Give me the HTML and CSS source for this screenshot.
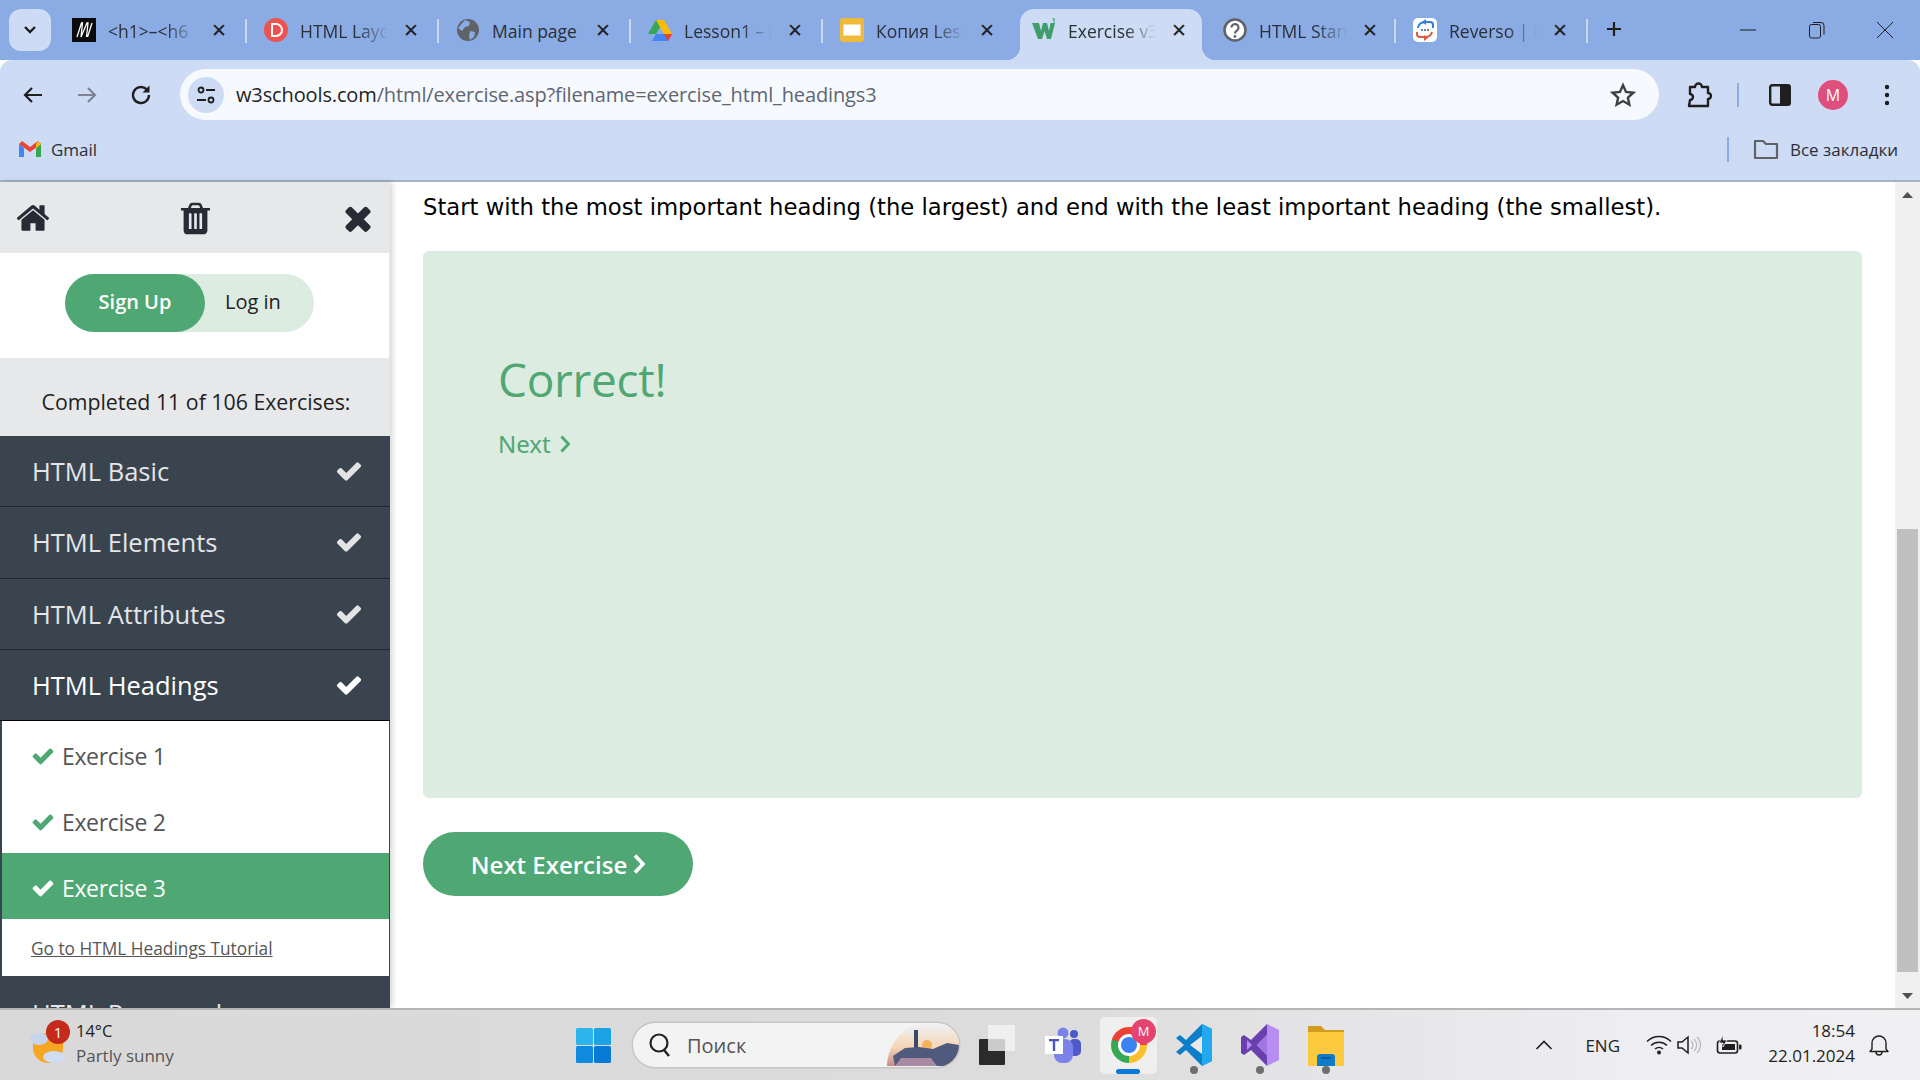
FILE: index.html
```html
<!DOCTYPE html>
<html lang="en">
<head>
<meta charset="utf-8">
<title>Exercise v3.0</title>
<link rel="stylesheet" href="styles.css">
</head>
<body>
<div class="window">
  <header class="tabstrip">
    <div class="tabmenu"><svg width="14" height="10" viewBox="0 0 14 10"><path d="M2 2l5 5 5-5" fill="none" stroke="#1f1f1f" stroke-width="2.4"/></svg></div>
    <div class="tab sep">
      <svg class="fav" viewBox="0 0 24 24"><rect width="24" height="24" fill="#0b0b0b"/><path d="M5 19L9.500 5h1l-1.500 14L15 5h1l-1.500 14M15.500 19L20 5" fill="none" stroke="#fff" stroke-width="1.300"/></svg>
      <span class="tabtext fade">&lt;h1&gt;–&lt;h6</span><span class="tabx">✕</span>
    </div>
    <div class="tab sep">
      <svg class="fav" viewBox="0 0 24 24"><circle cx="12" cy="12" r="12" fill="#ef5350"/><path d="M8 6h4a6 6 0 010 12H8z" fill="none" stroke="#fff" stroke-width="2"/></svg>
      <span class="tabtext fade">HTML Layc</span><span class="tabx">✕</span>
    </div>
    <div class="tab sep">
      <svg class="fav" viewBox="0 0 24 24"><circle cx="12" cy="12" r="11" fill="#5f6368"/><path d="M9 2l5 2-1 4-4 1-3 4-4-3zM14 13l5 1-1 5-4 3-1-4z" fill="#8aabe3"/></svg>
      <span class="tabtext">Main page</span><span class="tabx">✕</span>
    </div>
    <div class="tab sep">
      <svg class="fav" viewBox="0 0 24 24"><path d="M8 2h8l-8 14H0z" fill="#34a853"/><path d="M8 2h8l8 14h-8z" fill="#fbbc04"/><path d="M4 23l4-7h16l-4 7z" fill="#4285f4"/><path d="M20 23l4-7h-8z" fill="#ea4335"/></svg>
      <span class="tabtext fade">Lesson1 – (</span><span class="tabx">✕</span>
    </div>
    <div class="tab">
      <svg class="fav" viewBox="0 0 24 24"><rect width="24" height="24" rx="3" fill="#efb93b"/><rect x="3.500" y="6.500" width="17" height="11" fill="#fff"/></svg>
      <span class="tabtext fade">Копия Less</span><span class="tabx">✕</span>
    </div>
    <div class="tab active">
      <svg class="fav" viewBox="0 0 24 24"><path d="M0 5h7l2 8 2-8h4l2 8 1.500-8H23l-4 16h-4l-2.500-8L10 21H6z" fill="#3f9c6b"/><path d="M20 1h3l-1.500 2c1.500 0 1.500 3-1.500 3" fill="none" stroke="#3f9c6b" stroke-width=".9"/></svg>
      <span class="tabtext fade">Exercise v3</span><span class="tabx">✕</span>
    </div>
    <div class="tab sep wide">
      <svg class="fav" viewBox="0 0 24 24"><circle cx="12" cy="12" r="10.500" fill="#fff" stroke="#5f6368" stroke-width="2.500"/><path d="M8.500 9.500a3.500 3.500 0 116 2.500c-1.500 1.300-2.500 1.800-2.500 3.500" fill="none" stroke="#5f6368" stroke-width="2.200"/><circle cx="12" cy="18.500" r="1.400" fill="#5f6368"/></svg>
      <span class="tabtext fade">HTML Stan</span><span class="tabx">✕</span>
    </div>
    <div class="tab sep">
      <svg class="fav" viewBox="0 0 24 24"><rect width="24" height="24" rx="5" fill="#fff"/><path d="M5 10a7 6 0 017-6h5a3 3 0 013 3v3" fill="none" stroke="#2f7fd6" stroke-width="2"/><path d="M13 1l-4 3 4 3z" fill="#2f7fd6"/><path d="M4 14v2a3 3 0 003 3h5a7 6 0 007-5" fill="none" stroke="#dd5b3a" stroke-width="2"/><path d="M11 17l4 3-4 3z" fill="#dd5b3a"/><circle cx="9" cy="12" r="1" fill="#2f5f96"/><circle cx="12" cy="12" r="1" fill="#2f5f96"/><circle cx="15" cy="12" r="1" fill="#2f5f96"/></svg>
      <span class="tabtext fade">Reverso | E</span><span class="tabx">✕</span>
    </div>
    <svg class="newtab" width="16" height="16" viewBox="0 0 16 16"><path d="M8 1v14M1 8h14" stroke="#1f1f1f" stroke-width="2.200"/></svg>
    <div class="winbtns">
      <svg width="16" height="16" viewBox="0 0 16 16"><path d="M0 8h16" stroke="#1f1f1f" stroke-width="1"/></svg>
      <svg width="16" height="18" viewBox="0 0 16 18"><rect x=".5" y="3.500" width="11" height="13.500" rx="2" fill="none" stroke="#1f1f1f"/><path d="M4 1.500h8a3 3 0 013 3v9" fill="none" stroke="#1f1f1f"/></svg>
      <svg width="16" height="16" viewBox="0 0 16 16"><path d="M0 0l16 16M16 0L0 16" stroke="#1f1f1f" stroke-width="1"/></svg>
    </div>
  </header>

  <div class="toolbar">
    <div class="navrow">
      <svg class="nav" viewBox="0 0 24 24"><path d="M21 12H4M11 5l-7 7 7 7" fill="none" stroke="#1f1f1f" stroke-width="2.200"/></svg>
      <svg class="nav" viewBox="0 0 24 24"><path d="M3 12h17M13 5l7 7-7 7" fill="none" stroke="#7d8594" stroke-width="2.200"/></svg>
      <svg class="nav" viewBox="0 0 24 24"><path d="M20 12a8 8 0 11-2.500-5.800" fill="none" stroke="#1f1f1f" stroke-width="2.400"/><path d="M20.500 2.500v7h-7z" fill="#1f1f1f"/></svg>
      <div class="omnibox">
        <div class="sitechip"><svg width="20" height="20" viewBox="0 0 20 20"><circle cx="5" cy="5" r="2.500" fill="none" stroke="#1f1f1f" stroke-width="1.800"/><path d="M10 5h9M1 15h9" stroke="#1f1f1f" stroke-width="1.800"/><circle cx="15" cy="15" r="2.500" fill="none" stroke="#1f1f1f" stroke-width="1.800"/></svg></div>
        <div class="url"><span class="urlhost">w3schools.com</span>/html/exercise.asp?filename=exercise_html_headings3</div>
        <svg class="star" viewBox="0 0 24 24"><path d="M12 3l2.800 6.200 6.700.7-5 4.500 1.400 6.600-5.900-3.400L6.100 21l1.400-6.600-5-4.500 6.700-.7z" fill="none" stroke="#3c4043" stroke-width="2.200"/></svg>
      </div>
      <svg class="ext" viewBox="0 0 26 26"><path d="M4 5h5a3.500 3.500 0 017 0h6v6a3 3 0 010 6v7H3l1-6a3 3 0 000-6z" fill="none" stroke="#1f1f1f" stroke-width="2.400" stroke-linejoin="round"/></svg>
      <span class="vsep tool"></span>
      <svg class="panel" viewBox="0 0 22 22"><rect x="1.200" y="1.200" width="19.600" height="19.600" rx="2" fill="none" stroke="#1f1f1f" stroke-width="2.400"/><rect x="11" y="1" width="10" height="20" fill="#1f1f1f"/></svg>
      <div class="avatar">M</div>
      <svg class="dots" viewBox="0 0 6 24"><circle cx="3" cy="4" r="2.200" fill="#1f1f1f"/><circle cx="3" cy="12" r="2.200" fill="#1f1f1f"/><circle cx="3" cy="20" r="2.200" fill="#1f1f1f"/></svg>
    </div>
    <div class="bookmarks">
      <svg class="gmail" viewBox="0 0 22 16"><path d="M0 3v13h5V7z" fill="#4285f4"/><path d="M22 3v13h-5V7z" fill="#34a853"/><path d="M0 3l11 8 11-8-3-3-8 6-8-6z" fill="#ea4335"/><path d="M19 0l3 3-5 4V3z" fill="#fbbc04"/></svg>
      <span class="bmtext">Gmail</span>
      <span class="vsep bm"></span>
      <svg class="folder" viewBox="0 0 26 22"><path d="M2 3h8l3 3h11v14H2z" fill="none" stroke="#5f6368" stroke-width="2.200" stroke-linejoin="round"/></svg>
      <span class="bmtext">Все закладки</span>
    </div>
  </div>

  <main class="page">
    <aside class="sidebar">
      <div class="sidetop">
        <svg class="ic-home" viewBox="0 0 1792 1792"><path d="M1472 992v480q0 26-19 45t-45 19h-384v-384h-256v384h-384q-26 0-45-19t-19-45v-480q0-1 .5-3t.5-3l575-474 575 474q1 2 1 6zm223-69l-62 74q-8 9-21 11h-3q-13 0-21-7l-692-577-692 577q-12 8-24 7-13-2-21-11l-62-74q-8-10-7-23.500t11-21.500l719-599q32-26 76-26t76 26l244 204v-195q0-14 9-23t23-9h192q14 0 23 9t9 23v408l219 182q10 8 11 21.500t-7 23.500z"/></svg>
        <svg class="ic-trash" viewBox="0 0 1792 1792"><path d="M704 1376v-704q0-14-9-23t-23-9h-64q-14 0-23 9t-9 23v704q0 14 9 23t23 9h64q14 0 23-9t9-23zm256 0v-704q0-14-9-23t-23-9h-64q-14 0-23 9t-9 23v704q0 14 9 23t23 9h64q14 0 23-9t9-23zm256 0v-704q0-14-9-23t-23-9h-64q-14 0-23 9t-9 23v704q0 14 9 23t23 9h64q14 0 23-9t9-23zm-544-992h448l-48-117q-7-9-17-11h-317q-10 2-17 11zm928 32v64q0 14-9 23t-23 9h-96v948q0 83-47 143.500t-113 60.500h-832q-66 0-113-58.500t-47-141.500v-952h-96q-14 0-23-9t-9-23v-64q0-14 9-23t23-9h309l70-167q15-37 54-63t79-26h320q40 0 79 26t54 63l70 167h309q14 0 23 9t9 23z"/></svg>
        <svg class="ic-times" viewBox="0 0 1792 1792"><path d="M1490 1322q0 40-28 68l-136 136q-28 28-68 28t-68-28l-294-294-294 294q-28 28-68 28t-68-28l-136-136q-28-28-28-68t28-68l294-294-294-294q-28-28-28-68t28-68l136-136q28-28 68-28t68 28l294 294 294-294q28-28 68-28t68 28l136 136q28 28 28 68t-28 68l-294 294 294 294q28 28 28 68z"/></svg>
      </div>
      <div class="authbox">
        <div class="authpill"><a class="signup">Sign Up</a><a class="login">Log in</a></div>
      </div>
      <div class="progress">Completed 11 of 106 Exercises:</div>
      <div class="cat"><span>HTML Basic</span><svg class="chk" viewBox="0 0 1792 1792"><path d="M1671 566q0 40-28 68l-724 724-136 136q-28 28-68 28t-68-28l-136-136-362-362q-28-28-28-68t28-68l136-136q28-28 68-28t68 28l294 295 656-657q28-28 68-28t68 28l136 136q28 28 28 68z"/></svg></div>
      <div class="cat"><span>HTML Elements</span><svg class="chk" viewBox="0 0 1792 1792"><path d="M1671 566q0 40-28 68l-724 724-136 136q-28 28-68 28t-68-28l-136-136-362-362q-28-28-28-68t28-68l136-136q28-28 68-28t68 28l294 295 656-657q28-28 68-28t68 28l136 136q28 28 28 68z"/></svg></div>
      <div class="cat"><span>HTML Attributes</span><svg class="chk" viewBox="0 0 1792 1792"><path d="M1671 566q0 40-28 68l-724 724-136 136q-28 28-68 28t-68-28l-136-136-362-362q-28-28-28-68t28-68l136-136q28-28 68-28t68 28l294 295 656-657q28-28 68-28t68 28l136 136q28 28 28 68z"/></svg></div>
      <div class="cat open"><span>HTML Headings</span><svg class="chk" viewBox="0 0 1792 1792"><path d="M1671 566q0 40-28 68l-724 724-136 136q-28 28-68 28t-68-28l-136-136-362-362q-28-28-28-68t28-68l136-136q28-28 68-28t68 28l294 295 656-657q28-28 68-28t68 28l136 136q28 28 28 68z"/></svg></div>
      <div class="sub">
        <div class="ex"><svg class="exchk" viewBox="0 0 1792 1792"><path d="M1671 566q0 40-28 68l-724 724-136 136q-28 28-68 28t-68-28l-136-136-362-362q-28-28-28-68t28-68l136-136q28-28 68-28t68 28l294 295 656-657q28-28 68-28t68 28l136 136q28 28 28 68z"/></svg>Exercise 1</div>
        <div class="ex"><svg class="exchk" viewBox="0 0 1792 1792"><path d="M1671 566q0 40-28 68l-724 724-136 136q-28 28-68 28t-68-28l-136-136-362-362q-28-28-28-68t28-68l136-136q28-28 68-28t68 28l294 295 656-657q28-28 68-28t68 28l136 136q28 28 28 68z"/></svg>Exercise 2</div>
        <div class="ex current"><svg class="exchk" viewBox="0 0 1792 1792"><path d="M1671 566q0 40-28 68l-724 724-136 136q-28 28-68 28t-68-28l-136-136-362-362q-28-28-28-68t28-68l136-136q28-28 68-28t68 28l294 295 656-657q28-28 68-28t68 28l136 136q28 28 28 68z"/></svg>Exercise 3</div>
        <a class="tutorial">Go to HTML Headings Tutorial</a>
      </div>
      <div class="cat tail"><span>HTML Paragraphs</span></div>
    </aside>

    <section class="content">
      <p class="task">Start with the most important heading (the largest) and end with the least important heading (the smallest).</p>
      <div class="result">
        <h2 class="correct">Correct!</h2>
        <a class="nextlink">Next <svg class="chev" viewBox="0 0 10 18"><path d="M1.500 1.500L8.500 9l-7 7.500" fill="none" stroke="#4fa773" stroke-width="3"/></svg></a>
      </div>
      <a class="nextbtn">Next Exercise <svg class="chev2" viewBox="0 0 12 20"><path d="M2 1.500L10 10l-8 8.500" fill="none" stroke="#fff" stroke-width="3.600"/></svg></a>
    </section>

    <div class="scrollbar">
      <svg class="sarrow" viewBox="0 0 11 6"><path d="M5.500 0L11 6H0z" fill="#505050"/></svg>
      <div class="strack"><div class="sthumb"></div></div>
      <svg class="sarrow" viewBox="0 0 11 6"><path d="M0 0h11L5.500 6z" fill="#505050"/></svg>
    </div>
  </main>

  <footer class="taskbar">
    <div class="weather">
      <div class="wicon">
        <svg width="36" height="42" viewBox="0 0 36 42"><path d="M3 18h30v6a16 16 0 01-30 0z" fill="#f0932b"/><circle cx="18" cy="24" r="15" fill="#f6a623"/><ellipse cx="9" cy="15" rx="9" ry="6" fill="#c6d4ee"/><ellipse cx="24" cy="33" rx="11" ry="6" fill="#cfdcf4"/></svg>
        <span class="wbadge">1</span>
      </div>
      <div class="wtext"><span class="wtemp">14°C</span><span class="wdesc">Partly sunny</span></div>
    </div>
    <div class="tb-center">
      <div class="slot win">
        <svg width="35" height="35" viewBox="0 0 35 35"><rect width="17" height="17" rx="1.500" fill="#2db4ec"/><rect x="18" width="17" height="17" rx="1.500" fill="#1ba3e6"/><rect y="18" width="17" height="17" rx="1.500" fill="#0f8ade"/><rect x="18" y="18" width="17" height="17" rx="1.500" fill="#0a7bd4"/></svg>
      </div>
      <div class="search">
        <svg width="24" height="26" viewBox="0 0 24 26"><circle cx="11" cy="11" r="8.500" fill="none" stroke="#222" stroke-width="2.200"/><path d="M16 18l5 6" stroke="#222" stroke-width="2.400"/></svg>
        <span>Поиск</span>
        <svg class="scene" width="78" height="42" viewBox="0 0 78 42"><defs><linearGradient id="sky" x1="0" y1="0" x2="0" y2="1"><stop offset="0" stop-color="#eef1f5"/><stop offset=".55" stop-color="#f6d6b6"/><stop offset="1" stop-color="#c78c8c"/></linearGradient></defs><path d="M6 42C6 20 25 0 40 0h24c8 0 14 9 14 21s-6 21-14 21z" fill="url(#sky)"/><circle cx="46" cy="21" r="5" fill="#f2b35c"/><rect x="33" y="6" width="4" height="18" fill="#3d4a66"/><path d="M12 32l12-8 14-1 14 2 14-6 12 2v10l-6 11H14z" fill="#4f5a7c"/><path d="M14 42l6-8h30l6 8z" fill="#a98aa3"/></svg>
      </div>
      <div class="slot taskview">
        <svg width="36" height="40" viewBox="0 0 36 40"><rect x="0" y="14" width="26" height="26" rx="1" fill="#2b2b2b"/><rect x="9" y="0" width="27" height="26" rx="1" fill="#f4f4f4" fill-opacity=".8"/></svg>
      </div>
      <div class="slot">
        <svg width="36" height="36" viewBox="0 0 36 36"><circle cx="29" cy="7" r="4" fill="#5059c9"/><rect x="24" y="12" width="12" height="17" rx="5" fill="#5059c9"/><circle cx="18" cy="6" r="5.500" fill="#7b83eb"/><rect x="9" y="12" width="19" height="24" rx="8" fill="#7b83eb"/><rect x="0" y="9" width="18" height="18" fill="#fff"/><path d="M4 12h10v2.200h-3.800V24H7.800v-9.800H4z" fill="#4b53bc"/></svg>
      </div>
      <div class="slot chrome-slot">
        <div class="chrome"><span class="chrome-in"></span></div>
        <span class="cbadge">M</span>
        <span class="runbar"></span>
      </div>
      <div class="slot run">
        <svg width="36" height="42" viewBox="0 0 36 42"><path d="M26 0l10 5v32l-10 5-16-16-6 5-4-3 8-7-8-7 4-3 6 5z" fill="#0c7fc8"/><path d="M26 0l10 5v32l-10 5z" fill="#22a9f0"/><path d="M26 12L14 21l12 9z" fill="#e9e9e9"/></svg>
      </div>
      <div class="slot run">
        <svg width="38" height="42" viewBox="0 0 38 42"><path d="M26 0l12 6v30l-12 6z" fill="#b88df2"/><path d="M26 0L10 16 3 11 0 13v16l3 2 7-5 16 16V31L16 21 26 11z" fill="#6a3fae"/><path d="M6 16l5 5-5 5z" fill="#b88df2"/><path d="M26 11L16 21l10 10z" fill="#a173e6"/></svg>
      </div>
      <div class="slot run">
        <svg width="36" height="42" viewBox="0 0 36 42"><path d="M0 2h13l4 4h19v6H0z" fill="#d19c1c"/><rect y="8" width="36" height="34" rx="1" fill="#fdc93f"/><path d="M9 42V33a3 3 0 013-3h12a3 3 0 013 3v9z" fill="#0f7cc9"/><rect x="13" y="33" width="10" height="2" fill="#0a5c9c"/></svg>
      </div>
    </div>
    <div class="tray">
      <svg class="caret" width="18" height="10" viewBox="0 0 18 10"><path d="M1.500 9L9 1.500 16.500 9" fill="none" stroke="#1f1f1f" stroke-width="1.600"/></svg>
      <span class="lang">ENG</span>
      <svg class="wifi" width="26" height="20" viewBox="0 0 26 20"><path d="M1 6.500a17 17 0 0124 0M5 10.500a11.500 11.500 0 0116 0M9 14a6 6 0 018 0" fill="none" stroke="#1f1f1f" stroke-width="1.500"/><circle cx="13" cy="17.500" r="2" fill="#1f1f1f"/></svg>
      <svg class="speaker" width="26" height="20" viewBox="0 0 26 20"><path d="M1 7h4l6-5v16l-6-5H1z" fill="none" stroke="#1f1f1f" stroke-width="1.500"/><path d="M14 6a5 5 0 010 8M17 4a8 8 0 010 12M20 2a11 11 0 010 16" fill="none" stroke="#b9b9bd" stroke-width="1.300"/></svg>
      <svg class="battery" width="26" height="20" viewBox="0 0 26 20"><rect x="1.500" y="6" width="20" height="12" rx="2.500" fill="#f0f0f3" stroke="#1f1f1f" stroke-width="1.600"/><rect x="6" y="9" width="13" height="6" fill="#1f1f1f"/><rect x="23" y="9.500" width="2.500" height="5" rx="1" fill="#1f1f1f"/><path d="M7 0L3 8h4v4l4-7H7z" fill="#1f1f1f" stroke="#f0f0f3" stroke-width=".8"/></svg>
      <div class="clock"><span>18:54</span><span>22.01.2024</span></div>
      <svg class="bell" width="20" height="22" viewBox="0 0 20 22"><path d="M3 15V9a7 7 0 0114 0v6l2 2.500H1zM7 18a3 3 0 006 0" fill="none" stroke="#1f1f1f" stroke-width="1.400" stroke-linejoin="round"/></svg>
    </div>
  </footer>
</div>
</body>
</html>
```
FILE: styles.css
```css
* { box-sizing: border-box; }
html, body { margin: 0; height: 100%; overflow: hidden; }
body { font-family: "Open Sans", "Noto Sans", "Liberation Sans", sans-serif; color: #1f1f1f; }
svg { display: block; flex: none; }

.window { width: 1920px; height: 1080px; display: flex; flex-direction: column; background: #fff; overflow: hidden; }

/* tab strip */
.tabstrip { height: 60px; background: #8aabe3; display: flex; align-items: flex-start; flex: none; padding-left: 9px; }
.tabmenu { width: 42px; height: 42px; margin: 9px 4px 0 0; border-radius: 12px; background: #cddbf5; display: flex; align-items: center; justify-content: center; }
.tab { width: 192px; height: 51px; margin-top: 9px; padding-left: 17px; padding-bottom: 9px; display: flex; align-items: center; position: relative; flex: none; }
.tab.wide { padding-left: 19px; }
.tab.sep::after { content: ""; position: absolute; right: 0; top: 10px; width: 2px; height: 24px; background: #c8d6f0; }
.fav { width: 24px; height: 24px; }
.tabtext { margin-left: 12px; width: 88px; padding-top: 2px; font-size: 17.500px; line-height: 24px; white-space: nowrap; color: #2a2f38; }
.tabtext.fade { -webkit-mask-image: linear-gradient(90deg, #000 65%, transparent 100%); mask-image: linear-gradient(90deg, #000 65%, transparent 100%); }
.tabx { margin-left: 13px; width: 20px; text-align: center; font-size: 19px; font-weight: 700; line-height: 24px; color: #1f1f1f; font-family: "DejaVu Sans", sans-serif; }
.tab.active { width: 182px; margin-left: 5px; margin-right: 2px; padding-left: 12px; background: #cddbf5; border-radius: 14px 14px 0 0; }
.tab.active::before, .tab.active::after { content: ""; position: absolute; bottom: 0; width: 14px; height: 14px; }
.tab.active::before { left: -14px; background: radial-gradient(circle at 0 0, transparent 14px, #cddbf5 14.500px); }
.tab.active::after { right: -14px; background: radial-gradient(circle at 100% 0, transparent 14px, #cddbf5 14.500px); }
.newtab { margin: 21px 0 0 18px; }
.winbtns { margin-left: auto; margin-top: 21px; width: 153px; display: flex; justify-content: space-between; align-items: center; margin-right: 27px; }

/* toolbar */
.toolbar { height: 122px; background: #cddbf5; flex: none; border-radius: 12px 12px 0 0; border-bottom: 2px solid #a5b2ca; }
.navrow { height: 60px; padding: 9px 0 0 21px; display: flex; align-items: center; }
.nav { width: 24px; height: 24px; margin-right: 30px; }
.nav:nth-child(3) { margin-right: 27px; }
.omnibox { width: 1479px; height: 51px; border-radius: 26px; background: #f6f9fe; display: flex; align-items: center; padding: 0 23px 0 8px; }
.sitechip { width: 36px; height: 36px; border-radius: 50%; background: #cddbf5; display: flex; align-items: center; justify-content: center; flex: none; }
.url { margin-left: 12px; flex: 1; font-size: 20px; color: #5f6672; white-space: nowrap; letter-spacing: -.13px; }
.urlhost { color: #1f1f1f; }
.star { width: 26px; height: 26px; }
.ext { width: 26px; height: 26px; margin-left: 27px; }
.vsep { display: block; width: 2px; background: #8aabe3; flex: none; }
.vsep.tool { height: 24px; margin-left: 25px; }
.panel { width: 22px; height: 22px; margin-left: 30px; }
.avatar { width: 30px; height: 30px; margin-left: 27px; border-radius: 50%; background: #de4f7d; color: #fff; font-size: 16px; display: flex; align-items: center; justify-content: center; flex: none; }
.dots { width: 6px; height: 24px; margin-left: 36px; }

.bookmarks { height: 60px; padding: 0 22px 2px 19px; display: flex; align-items: center; }
.gmail { width: 22px; height: 16px; }
.bmtext { font-size: 17px; margin-left: 10px; color: #2a2f38; white-space: nowrap; }
.vsep.bm { height: 25px; margin-left: auto; }
.folder { width: 26px; height: 22px; margin-left: 24px; }
.bookmarks .bmtext:last-child { margin-left: 11px; }

/* page */
.page { flex: 1; min-height: 0; display: flex; background: #fff; }
.sidebar { width: 390px; flex: none; background: #3a444e; overflow: hidden; box-shadow: 2px 0 6px rgba(0,0,0,.18); position: relative; }
.sidetop { height: 71px; background: #e7e8ea; display: flex; align-items: center; justify-content: space-between; padding: 1px 13px 0 15px; }
.sidetop svg { fill: #282a35; }
.ic-home { width: 36px; height: 36px; }
.ic-trash { width: 37px; height: 37px; }
.ic-times { width: 38px; height: 38px; }
.authbox { height: 105px; border-right: 1px solid #e7e8ea; background: #fff; padding: 21px 0 0 65px; }
.authpill { width: 249px; height: 58px; border-radius: 29px; background: #ddece1; display: flex; align-items: center; font-size: 20px; line-height: 26px; padding-bottom: 0; }
.signup { width: 140px; height: 58px; border-radius: 29px; background: #4fa773; color: #fff; display: flex; align-items: center; justify-content: center; font-weight: 600; padding-bottom: 2px; }
.login { margin-left: 20px; margin-top: -2px; color: #222; }
.progress { height: 78px; background: #e7e8ea; padding-top: 8px; padding-left: 2px; display: flex; align-items: center; justify-content: center; font-size: 21.300px; color: #1f1f1f; }
.cat { height: 71.250px; padding: 0 27px 0 32px; background: #3a444e; border-bottom: 1px solid #20262c; display: flex; align-items: center; justify-content: space-between; font-size: 25.500px; color: #e3e5e8; }
.cat.open { color: #fff; font-weight: 500; border-bottom-color: #000; }
.cat.tail { padding-top: 3px; }
.chk { width: 28px; height: 28px; fill: #e3e3e3; }
.cat.open .chk { fill: #fff; }
.sub { margin: 0 1px 0 2px; background: #fff; display: flex; flex-direction: column; }
.ex { height: 66px; display: flex; align-items: center; padding: 3px 0 0 29px; font-size: 23px; letter-spacing: -.35px; color: #555; }
.exchk { width: 24px; height: 24px; margin-right: 7px; fill: #4fa773; }
.ex.current { background: #4fa773; color: #fff; }
.ex.current .exchk { fill: #fff; }
.tutorial { height: 57px; padding: 2px 0 0 29px; display: flex; align-items: center; font-size: 17.300px; color: #555; text-decoration: underline; }

.content { flex: 1; min-width: 0; padding: 7px 33px 0 33px; }
.task { margin: 0; font-family: "DejaVu Sans", Verdana, sans-serif; font-size: 22.720px; line-height: 36px; color: #000; white-space: nowrap; }
.result { margin-top: 26px; height: 547px; background: #ddece1; border-radius: 6px; padding: 96px 0 0 75px; color: #4fa773; }
.correct { margin: 0; font-size: 46px; font-weight: 400; letter-spacing: -.3px; line-height: 64px; }
.nextlink { margin-top: 17px; font-size: 24px; line-height: 32px; display: inline-flex; align-items: center; gap: 9px; font-family: "Noto Sans", sans-serif; }
.chev { width: 10px; height: 18px; }
.nextbtn { margin-top: 34px; width: 270px; height: 64px; border-radius: 32px; background: #4fa773; color: #fff; font-size: 24px; font-weight: 600; display: flex; align-items: center; justify-content: center; gap: 6px; }
.chev2 { width: 12px; height: 20px; }

.scrollbar { width: 25px; flex: none; background: #f0f0f0; display: flex; flex-direction: column; align-items: center; padding: 10px 0 9px; gap: 8px; }
.sarrow { width: 11px; height: 6px; }
.strack { flex: 1; width: 100%; padding: 0 2px 13px; display: flex; flex-direction: column; justify-content: flex-end; }
.sthumb { height: 443px; background: #c0c0c0; }

/* taskbar */
.taskbar { height: 72px; flex: none; border-top: 2px solid #b5b5b5; display: flex; align-items: center; background: linear-gradient(90deg, #d9d9d9 0%, #dcdcdc 55%, #eeeef2 85%, #f0f0f3 100%); position: relative; }
.weather { width: 560px; flex: none; display: flex; align-items: center; padding-left: 30px; }
.wicon { position: relative; width: 36px; height: 42px; }
.wbadge { position: absolute; left: 16px; top: -4px; width: 24px; height: 24px; border-radius: 50%; background: #c42b1c; color: #fff; font-size: 15px; display: flex; align-items: center; justify-content: center; }
.wtext { margin: -4px 0 0 10px; display: flex; flex-direction: column; }
.wtemp { font-size: 16.500px; line-height: 25px; color: #1f1f1f; }
.wdesc { font-size: 17px; line-height: 25px; color: #555; }
.tb-center { display: flex; align-items: center; }
.slot { width: 66px; height: 57px; display: flex; align-items: center; justify-content: center; position: relative; flex: none; }
.slot.win { width: 67px; }
.slot.run::after { content: ""; position: absolute; bottom: 0; left: 29px; width: 8px; height: 8px; border-radius: 50%; background: #6e6e6e; }
.search { width: 326px; height: 44px; margin: 0 5px 0 6px; border-radius: 22px; background: #f3f3f3; box-shadow: 0 0 0 1.500px #c6c6c6; display: flex; align-items: center; padding-left: 15px; position: relative; overflow: hidden; font-size: 20px; color: #555; }
.search span { margin-left: 15px; }
.scene { margin-left: auto; }
.chrome-slot { background: #efefef; border-radius: 5px; width: 57px; margin: 0 4px; }
.chrome { width: 36px; height: 36px; border-radius: 50%; background: conic-gradient(#ea4335 0 25%, #fbc02d 25% 50%, #34a853 50% 80%, #ea4335 80%); display: flex; align-items: center; justify-content: center; }
.chrome-in { width: 16px; height: 16px; border-radius: 50%; background: #3b82f0; box-shadow: 0 0 0 3px #fff; }
.cbadge { position: absolute; right: 1px; top: 2px; width: 25px; height: 25px; border-radius: 50%; background: #e5436f; color: #fff; font-size: 13px; display: flex; align-items: center; justify-content: center; }
.runbar { position: absolute; left: 16px; bottom: 0; width: 24px; height: 5px; border-radius: 3px; background: #0a78d4; }
.tray { margin-left: auto; display: flex; align-items: center; padding-right: 31px; }
.lang { font-size: 17px; margin-left: 32px; margin-right: -1px; color: #1f1f1f; }
.wifi { margin-left: 27px; }
.speaker { margin-left: 5px; }
.battery { margin-left: 13px; }
.clock { width: 113px; margin: -4px 14px 0 0; display: flex; flex-direction: column; align-items: flex-end; font-size: 17px; line-height: 25px; color: #1f1f1f; }
```
